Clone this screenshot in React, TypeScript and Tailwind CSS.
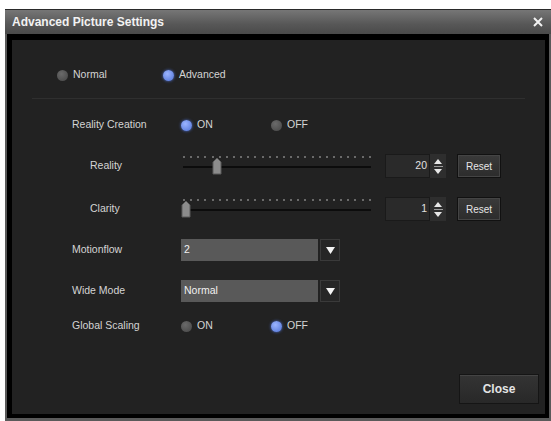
import type { ReactNode } from "react";

const FONT = { fontFamily: '"Liberation Sans", Arial, sans-serif' };

function Radio({ on, label, className = "" }: { on: boolean; label: string; className?: string }) {
  return (
    <div className={`flex items-center ${className}`}>
      <span
        className={
          on
            ? "h-[11px] w-[11px] rounded-full bg-[radial-gradient(circle_at_40%_35%,#9bb4ff,#4f72d6)] shadow-[0_0_3px_#4f72d6]"
            : "h-[11px] w-[11px] rounded-full bg-[radial-gradient(circle_at_40%_35%,#6a6a6a,#454545)]"
        }
      />
      <span className="ml-[5px] text-[10.5px] text-[#d4d4d4]">{label}</span>
    </div>
  );
}

function Row({ label, indent, children, className = "" }: { label: string; indent?: boolean; children: ReactNode; className?: string }) {
  return (
    <div className={`flex h-[24px] items-center ${className}`}>
      <div className={`w-[109px] text-[10.5px] text-[#d4d4d4] ${indent ? "pl-[18px]" : ""}`}>{label}</div>
      {children}
    </div>
  );
}

function Slider({ pos }: { pos: number }) {
  return (
    <div className="relative h-[24px] w-[190px]">
      <div className="absolute left-[2px] right-0 top-[2px] flex justify-between">
        {Array.from({ length: 27 }).map((_, i) => (
          <span key={i} className="h-[2px] w-[2px] bg-[#6a6a6a]" />
        ))}
      </div>
      <div className="absolute left-[2px] right-0 top-[12px] h-[2px] bg-[#0c0c0c]" />
      <svg
        className="absolute top-[3px]"
        style={{ left: pos }}
        width="10"
        height="18"
        viewBox="0 0 10 18"
      >
        <path d="M5 1 L9 5 L9 17 L1 17 L1 5 Z" fill="#8c8c8c" stroke="#5a5a5a" strokeWidth="1" />
      </svg>
    </div>
  );
}

function NumberBox({ value }: { value: string }) {
  return (
    <div className="ml-[14px] flex h-[24px] items-stretch">
      <div className="flex w-[45px] items-center justify-end border border-[#1a1a1a] bg-[#2a2a2a] pr-[2px] text-[10.5px] text-[#e0e0e0]">
        {value}
      </div>
      <div className="flex w-[16px] flex-col items-center justify-center gap-[2px] bg-[#2e2e2e]">
        <svg width="8" height="5" viewBox="0 0 8 5">
          <path d="M4 0 L8 5 L0 5 Z" fill="#e8e8e8" />
        </svg>
        <span className="h-[1px] w-[9px] bg-[#9a9a9a]" />
        <svg width="8" height="5" viewBox="0 0 8 5">
          <path d="M0 0 L8 0 L4 5 Z" fill="#e8e8e8" />
        </svg>
      </div>
    </div>
  );
}

function ResetButton() {
  return (
    <button className="ml-[11px] h-[24px] w-[44px] border border-[#111] bg-[linear-gradient(#3a3a3a,#2c2c2c)] text-[10px] text-[#e6e6e6] shadow-[inset_0_0_0_1px_#444]">
      Reset
    </button>
  );
}

function Dropdown({ value }: { value: string }) {
  return (
    <div className="flex h-[22px] items-stretch">
      <div className="flex w-[137px] items-center bg-[#595959] pl-[3px] text-[10.5px] text-[#f0f0f0]">{value}</div>
      <div className="ml-[2px] flex w-[20px] items-center justify-center border border-[#3a3a3a] bg-[#262626]">
        <svg width="9" height="7" viewBox="0 0 9 7">
          <path d="M0 0 L9 0 L4.5 7 Z" fill="#f4f4f4" />
        </svg>
      </div>
    </div>
  );
}

export default function App() {
  return (
    <div className="h-[421px] w-[551px] overflow-hidden bg-white pl-[5px] pt-[9px]" style={FONT}>
      <div className="flex h-[412px] w-[546px] flex-col bg-[#5a5a5a]">
        <div className="flex h-[25px] items-center justify-between border-t border-[#2a2a2a] bg-[linear-gradient(#767676,#575757_60%,#4a4a4a)] pl-[7px] pr-[8px]">
          <span className="text-[12px] font-bold text-[#f2f2f2]">Advanced Picture Settings</span>
          <svg width="10" height="10" viewBox="0 0 10 10">
            <path d="M1 1 L9 9 M9 1 L1 9" stroke="#f2f2f2" strokeWidth="2" />
          </svg>
        </div>
        <div className="mx-[2px] mb-[3px] flex-1 bg-black pb-[4px] pl-[5px] pr-[4px] pt-[6px]">
          <div className="h-full bg-[#222222] pt-[23px]">
            <div className="flex h-[24px] items-center">
              <Radio on={false} label="Normal" className="ml-[45px] w-[106px]" />
              <Radio on label="Advanced" />
            </div>
            <div className="ml-[20px] mt-[11px] h-px w-[493px] bg-[#2f2f2f]" />
            <div className="pl-[60px]">
              <Row label="Reality Creation" className="mt-[14px]">
                <Radio on label="ON" className="w-[90px]" />
                <Radio on={false} label="OFF" />
              </Row>
              <Row label="Reality" indent className="mt-[17px]">
                <Slider pos={31} />
                <NumberBox value="20" />
                <ResetButton />
              </Row>
              <Row label="Clarity" indent className="mt-[19px]">
                <Slider pos={0} />
                <NumberBox value="1" />
                <ResetButton />
              </Row>
              <Row label="Motionflow" className="mt-[17px]">
                <Dropdown value="2" />
              </Row>
              <Row label="Wide Mode" className="mt-[17px]">
                <Dropdown value="Normal" />
              </Row>
              <Row label="Global Scaling" className="mt-[11px]">
                <Radio on={false} label="ON" className="w-[90px]" />
                <Radio on label="OFF" />
              </Row>
            </div>
            <div className="mr-[6px] mt-[36px] flex justify-end">
              <button className="h-[30px] w-[80px] border border-[#151515] bg-[linear-gradient(#343434,#282828)] text-[12px] font-bold text-[#e4e4e4] shadow-[inset_0_1px_0_#444]">
                Close
              </button>
            </div>
          </div>
        </div>
      </div>
    </div>
  );
}
